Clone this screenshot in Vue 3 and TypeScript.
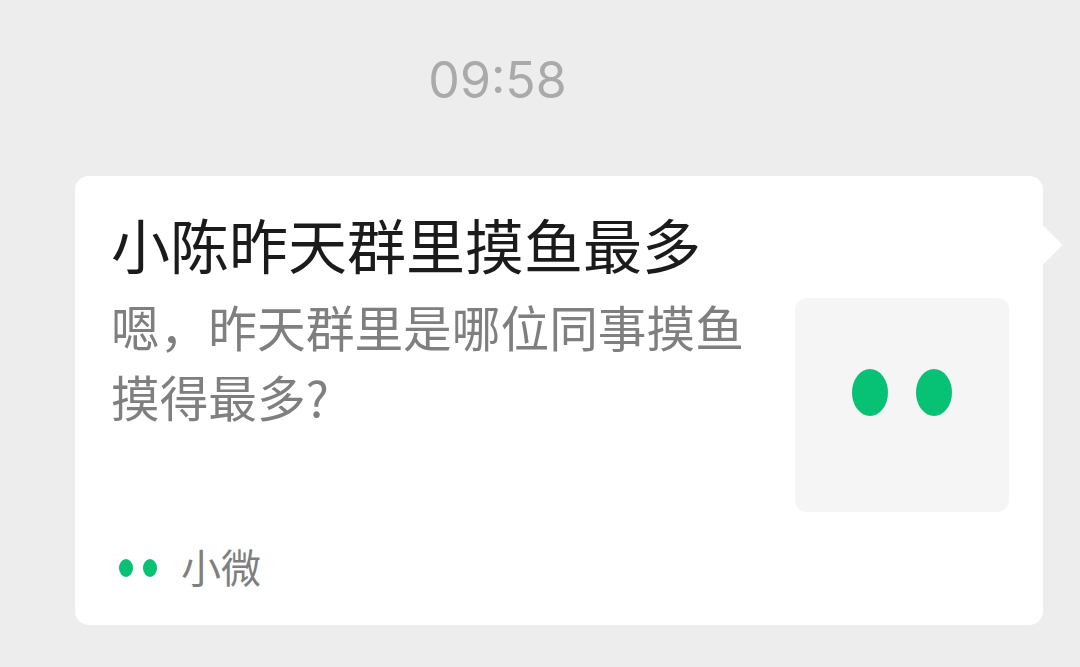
<script setup lang="ts">
const time = '09:58'
const title = '小陈昨天群里摸鱼最多'
const desc = '嗯\uFF0C昨天群里是哪位同事摸鱼摸得最多?'
const source = '小微'
</script>

<template>
  <div class="page">
    <div class="time">{{ time }}</div>
    <div class="card">
      <span class="arrow"></span>
      <div class="title">{{ title }}</div>
      <div class="body">
        <div class="desc">{{ desc }}</div>
        <div class="thumb">
          <span class="eye"></span>
          <span class="eye"></span>
        </div>
      </div>
      <div class="footer">
        <span class="dots">
          <span class="dot"></span>
          <span class="dot"></span>
        </span>
        <span class="source">{{ source }}</span>
      </div>
    </div>
  </div>
</template>

<style>
html,
body {
  margin: 0;
  background: #ededed;
}
</style>

<style scoped>
.page {
  width: 1080px;
  height: 667px;
  box-sizing: border-box;
  background: #ededed;
  padding: 176px 37px 0 75px;
  position: relative;
  overflow: hidden;
  font-family: "Noto Sans CJK SC", "Liberation Sans", sans-serif;
}

.time {
  position: absolute;
  top: 48px;
  left: 0;
  width: 995px;
  text-align: center;
  font-family: "Inter", "Liberation Sans", sans-serif;
  font-size: 50px;
  line-height: 64px;
  color: #aaaaaa;
}

.card {
  position: relative;
  height: 449px;
  box-sizing: border-box;
  background: #fff;
  border-radius: 14px;
  padding: 33px 34px 0 36px;
}

.arrow {
  position: absolute;
  right: -14px;
  top: 55px;
  width: 28px;
  height: 28px;
  background: #fff;
  transform: rotate(45deg);
  border-radius: 3px;
}

.title {
  font-size: 59px;
  line-height: 70px;
  color: #1b1b1b;
}

.body {
  display: flex;
  justify-content: space-between;
  margin-top: 19px;
}

.desc {
  width: 640px;
  font-size: 48.7px;
  line-height: 70px;
  color: #7f7f7f;
  margin-top: -7px;
}

.thumb {
  width: 214px;
  height: 214px;
  box-sizing: border-box;
  padding-bottom: 26px;
  background: #f5f5f5;
  border-radius: 12px;
  display: flex;
  align-items: center;
  justify-content: center;
  gap: 28px;
}

.eye {
  width: 36px;
  height: 47px;
  border-radius: 50%;
  background: #07c275;
}

.footer {
  display: flex;
  align-items: center;
  margin-top: 28px;
  padding-left: 8px;
}

.dots {
  display: flex;
  gap: 10px;
  margin-right: 24px;
}

.dot {
  width: 14px;
  height: 18px;
  border-radius: 50%;
  background: #07c275;
}

.source {
  font-size: 40px;
  line-height: 52px;
  margin-bottom: 4px;
  color: #7f7f7f;
}
</style>
